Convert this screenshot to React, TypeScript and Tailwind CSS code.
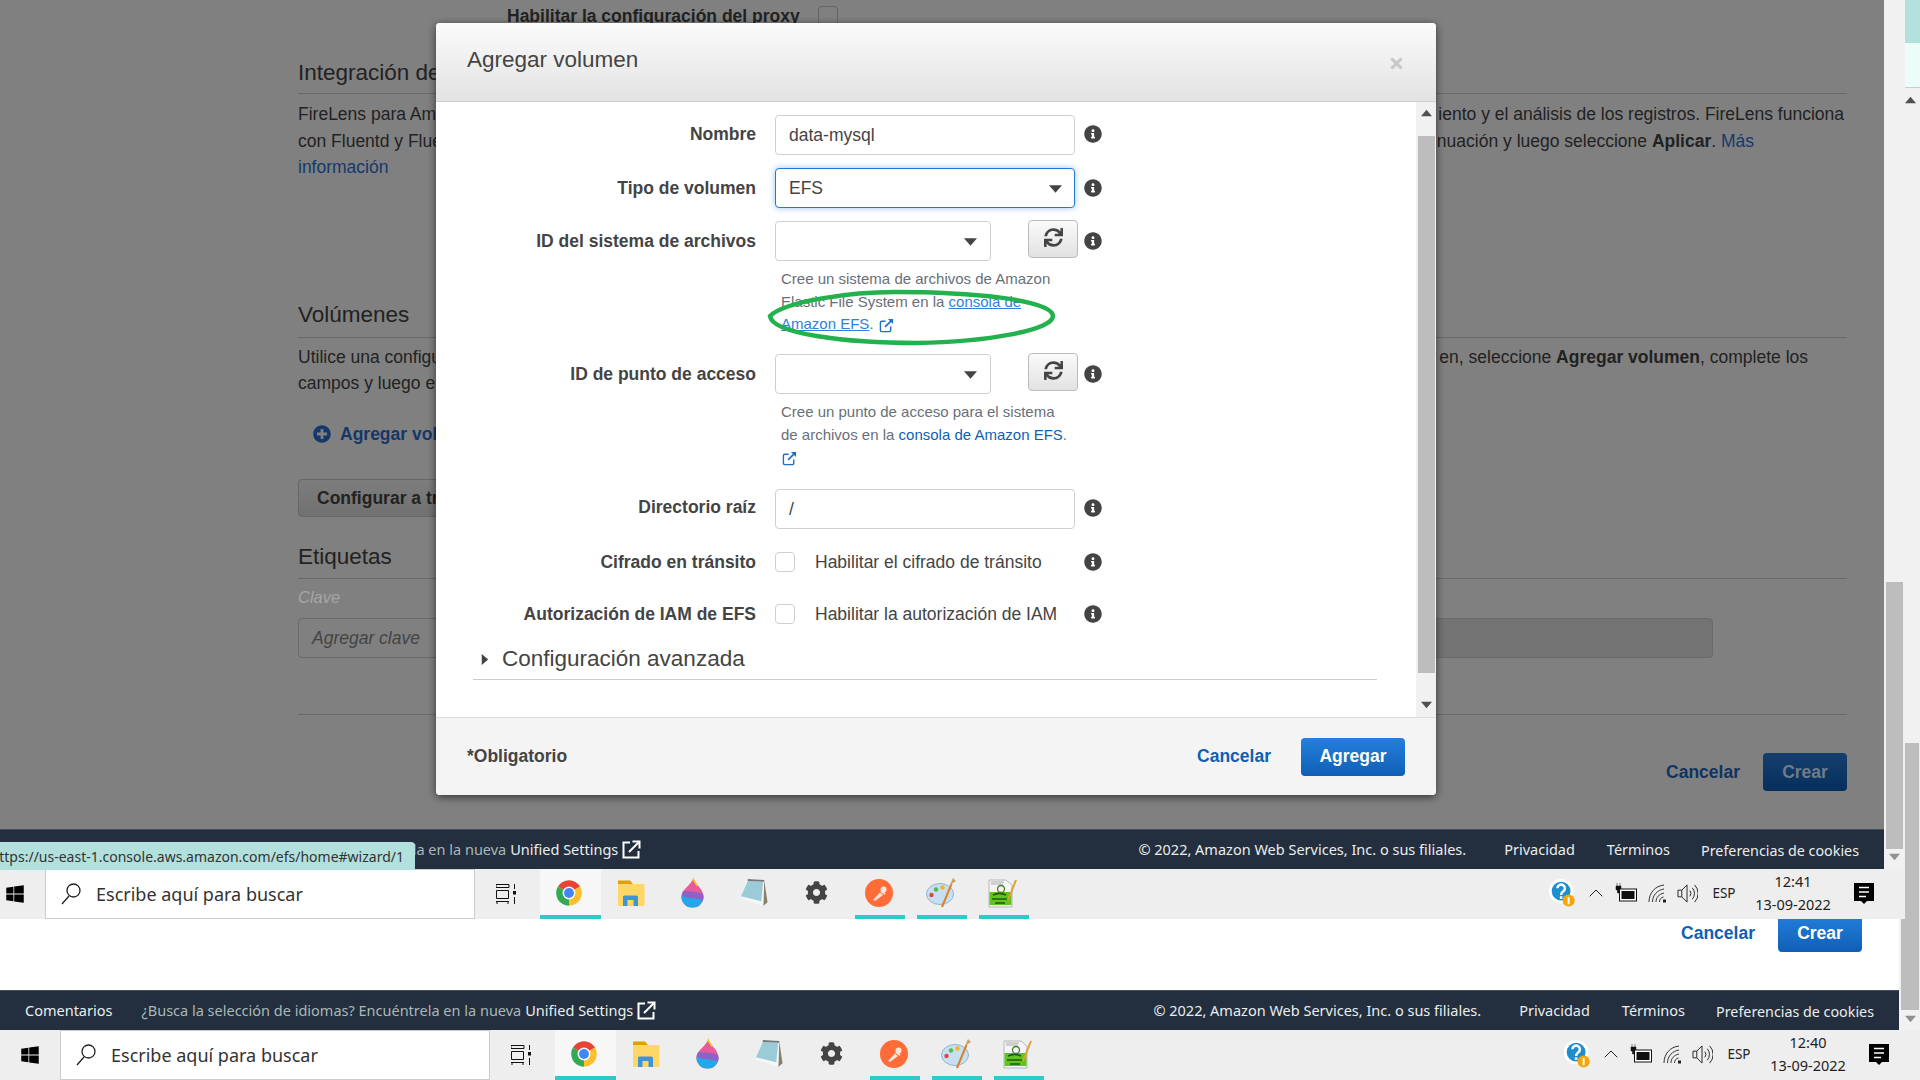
import React from "react";
import { FaInfoCircle, FaSync, FaTimes, FaPlusCircle, FaWindows, FaCog } from "react-icons/fa";
import { ChevronUp } from "lucide-react";

const Tri = ({ dir = "down", className = "" }: { dir?: "down" | "up" | "right"; className?: string }) => (
  <svg viewBox="0 0 12 12" className={className} fill="currentColor">
    {dir === "down" && <polygon points="0,3 12,3 6,10" />}
    {dir === "up" && <polygon points="0,10 12,10 6,3" />}
    {dir === "right" && <polygon points="3,0 10,6 3,12" />}
  </svg>
);

const ExtLink = ({ className = "" }: { className?: string }) => (
  <svg viewBox="0 0 16 16" className={className} fill="none" stroke="currentColor">
    <path d="M12.5 9v4a1.5 1.5 0 0 1-1.5 1.5H3A1.5 1.5 0 0 1 1.5 13V5A1.5 1.5 0 0 1 3 3.500h4" strokeWidth="1.500" />
    <path d="M6.500 9.500 14 2" strokeWidth="1.800" />
    <path d="M9.500 1h5.500v5.500z" fill="currentColor" stroke="none" />
  </svg>
);

const SettingsLink = () => (
  <svg viewBox="0 0 19 19" className="w-[19px] h-[19px] text-white ml-[4px]" fill="none" stroke="currentColor" strokeWidth="2">
    <path d="M8 2.500H1.500v15h15V11" />
    <path d="M7 12 16.500 2.500" />
    <path d="M10.500 1.500h7v7" />
  </svg>
);

const Chrome = () => (
  <svg viewBox="0 0 48 48" className="w-[28px] h-[28px]">
    <path d="M24 24 4.950 13A22 22 0 0 1 43.050 13z" fill="#ea4335" />
    <path d="M24 24 43.050 13A22 22 0 0 1 24 46z" fill="#fbc02d" />
    <path d="M24 24 24 46A22 22 0 0 1 4.950 13z" fill="#34a853" />
    <circle cx="24" cy="24" r="11" fill="#fff" />
    <circle cx="24" cy="24" r="8.500" fill="#4285f4" />
  </svg>
);

const Folder = () => (
  <svg viewBox="0 0 28 28" className="w-[28px] h-[28px]">
    <path d="M1 1.500h12l3 3.500H1z" fill="#e0a000" />
    <rect x="1" y="5" width="26.500" height="22" rx="1" fill="#ffd766" />
    <path d="M6 27V18a1.500 1.500 0 0 1 1.500-1.500h12A1.500 1.500 0 0 1 21 18v9h-4.500v-6h-6v6z" fill="#3d94dd" />
  </svg>
);

const Drop = ({ id }: { id: string }) => (
  <svg viewBox="0 0 24 32" className="w-[23px] h-[31px]">
    <defs>
      <clipPath id={id}>
        <path d="M13 0C14 7 23.500 12 23.500 20.500A11.500 11.500 0 0 1 .5 20.500C.5 12 11 9 13 0z" />
      </clipPath>
    </defs>
    <g clipPath={`url(#${id})`}>
      <rect width="24" height="32" fill="#e85a98" />
      <path d="M10 0h14v9h-8z" fill="#f7d117" />
      <path d="M0 14C8 16 16 14 24 18V25C16 21 8 23 0 19z" fill="#8a62c8" />
      <path d="M0 19C8 23 16 21 24 25V32H0z" fill="#1fa8ea" />
    </g>
  </svg>
);

const NotepadIcon = () => (
  <svg viewBox="0 0 30 30" className="w-[29px] h-[29px]">
    <path d="M25 2 28.500 25 24 29z" fill="#8b8064" />
    <path d="M8 1 25 2 24 29 0 21z" fill="#f2f7f8" />
    <path d="M8 3 24 4 22 24 1 19z" fill="#9ccbd8" />
    <path d="M8 1 25 2 25 4 8 3z" fill="#777" />
  </svg>
);

const Postman = () => (
  <svg viewBox="0 0 28 28" className="w-[28px] h-[28px]">
    <circle cx="14" cy="14" r="14" fill="#ff6c37" />
    <path d="M8 21 15 13.500l3 2.500L10 22z" fill="#ffe3d8" />
    <circle cx="18.500" cy="10.500" r="3" fill="#ffe3d8" />
    <path d="M16 12l4 3" stroke="#ffe3d8" strokeWidth="2" />
  </svg>
);

const Palette = () => (
  <svg viewBox="0 0 30 30" className="w-[30px] h-[30px]">
    <ellipse cx="14" cy="16" rx="13.500" ry="10.500" fill="#c6e0f2" stroke="#7ea8c8" strokeWidth="0.800" />
    <circle cx="5.500" cy="17" r="2.200" fill="#e0453e" />
    <circle cx="10" cy="11.500" r="2.200" fill="#58b848" />
    <circle cx="16.500" cy="9.500" r="2.200" fill="#f0b820" />
    <path d="M16 29 25.500 6" stroke="#d8822a" strokeWidth="2" />
    <path d="M24 7 27 0 30 3z" fill="#c8a070" />
  </svg>
);

const NotepadPP = () => (
  <svg viewBox="0 0 30 30" className="w-[30px] h-[30px]">
    <path d="M1 2h17l6 5v22H1z" fill="#f4f4f4" stroke="#aaa" strokeWidth="0.800" />
    <path d="M3 4h13M3 6h12" stroke="#9a9a9a" strokeWidth="0.800" />
    <rect x="1.500" y="14" width="22" height="13" fill="#5fc41c" />
    <path d="M5 17c4-2 9-2 13 0M4 21h15M7 25h10" stroke="#23561a" strokeWidth="1.600" fill="none" />
    <circle cx="13" cy="11" r="3.500" fill="none" stroke="#447a2a" strokeWidth="1.300" />
    <path d="M20 22 28 2" stroke="#e0a030" strokeWidth="2" />
  </svg>
);

const TaskView = () => (
  <svg viewBox="0 0 21 20" className="w-[21px] h-[20px]" fill="none" stroke="#111" strokeWidth="1">
    <path d="M0 .5h13M0 3.500h13M.5 6.500h12v8H.5zM0 17.500h13M1 17.500V20M12 17.500V20M0 .5V3.500M13 .5V3.500" />
    <path d="M18.500 0v5M18.500 13v7" />
    <rect x="17" y="7" width="3" height="3.500" fill="#111" stroke="none" />
  </svg>
);

const Magnifier = () => (
  <svg viewBox="0 0 20 22" className="w-[20px] h-[22px]" fill="none" stroke="#222" strokeWidth="1.300">
    <circle cx="12.500" cy="7.500" r="6.500" />
    <path d="M8 13 1 21" />
  </svg>
);

const HelpIcon = () => (
  <svg viewBox="0 0 30 32" className="w-[30px] h-[30px]">
    <circle cx="13" cy="14" r="13" fill="#fff" />
    <circle cx="13" cy="14" r="10" fill="#1f8ecf" />
    <path d="M9 11a4 4 0 1 1 6 3.500c-1.500 1-2 1.500-2 3.500" fill="none" stroke="#fff" strokeWidth="2.600" />
    <rect x="11.600" y="19.500" width="2.800" height="2.800" fill="#fff" />
    <circle cx="21" cy="24" r="6.500" fill="#f4a60c" />
    <rect x="20" y="20.500" width="2" height="7.500" fill="#fff" />
  </svg>
);

const Battery = () => (
  <svg viewBox="0 0 22 20" className="w-[22px] h-[20px]">
    <path d="M2 0v3M5 0v3M1 3h5v4H4.500v3h-2V7H1z" fill="#111" stroke="#111" strokeWidth="0.500" />
    <rect x="4.500" y="6" width="17" height="12" fill="#fff" stroke="#111" />
    <rect x="6.500" y="8" width="13" height="8" fill="#111" />
  </svg>
);

const WifiIcon = () => (
  <svg viewBox="0 0 20 20" className="w-[20px] h-[20px]" fill="none" stroke="#333" strokeWidth="1">
    <path d="M1 19C1 10 7 3 16 2" />
    <path d="M4.500 19C4.500 12 9.500 7 16 6" />
    <path d="M8 19C8 14.500 11 11 16 10" />
    <path d="M11.500 19c0-2.500 1.500-4.500 4-5" />
    <rect x="15" y="16.500" width="3" height="3" fill="#222" stroke="none" />
  </svg>
);

const SoundIcon = () => (
  <svg viewBox="0 0 22 22" className="w-[21px] h-[21px]" fill="none" stroke="#222" strokeWidth="1">
    <path d="M1 7.500h4L10.500 2v18L5 14.500H1zM5 7.500v7" />
    <path d="M13.500 8a5 5 0 0 1 0 6" />
    <path d="M16 5a9 9 0 0 1 0 12" />
    <path d="M18.500 2a13 13 0 0 1 0 18" />
  </svg>
);

const NotifIcon = () => (
  <svg viewBox="0 0 20 21" className="w-[20px] h-[21px]">
    <rect width="20" height="18" fill="#000" />
    <path d="M7 18h6l-3 3z" fill="#000" />
    <path d="M5 4.500h10M5 9h10M5 13.500h7" stroke="#fff" strokeWidth="1.300" />
  </svg>
);

const uiFont = "font-['Noto_Sans','Open_Sans',sans-serif]";
const awsFont = "font-['Liberation_Sans',Arial,sans-serif]";

const Tile = ({ children, bar }: { children: React.ReactNode; bar?: boolean }) => (
  <div className="relative w-[62px] h-full flex items-center justify-center pb-[3px] pr-[3px]">
    {children}
    {bar && <div className="absolute bottom-0 left-[6px] right-[6px] h-[4px] bg-[#2ecacb]" />}
  </div>
);

const Taskbar = ({ lead, time, width, dropId }: { lead: string; time: string; width: string; dropId: string }) => (
  <div className={`${width} ${uiFont} h-[50px] bg-[#eeeeee] flex items-stretch shrink-0 text-[#222]`}>
    <div className={`${lead} flex items-center justify-end pr-[20px] shrink-0`}>
      <FaWindows className="w-[20px] h-[20px] text-black" />
    </div>
    <div className="w-[430px] shrink-0 bg-white border border-[#cccccc] flex items-center pl-[15px] gap-[15px]">
      <Magnifier />
      <span className="text-[18px] text-[#333]">Escribe aquí para buscar</span>
    </div>
    <div className="w-[65px] shrink-0 flex items-center justify-center pr-[3px]">
      <TaskView />
    </div>
    <div className="relative w-[61px] shrink-0 bg-[#f7f7f7] flex items-center justify-center pb-[3px] pr-[3px]">
      <Chrome />
      <div className="absolute bottom-0 inset-x-0 h-[4px] bg-[#2ecacb]" />
    </div>
    <Tile><Folder /></Tile>
    <Tile><Drop id={dropId} /></Tile>
    <Tile><NotepadIcon /></Tile>
    <Tile><FaCog className="w-[23px] h-[23px] text-[#444]" /></Tile>
    <Tile bar><Postman /></Tile>
    <Tile bar><Palette /></Tile>
    <Tile bar><NotepadPP /></Tile>
    <div className="ml-auto flex items-center h-full pr-[14px] pb-[2px]">
      <div className="w-[36px] flex justify-center"><HelpIcon /></div>
      <div className="w-[30px] flex justify-center"><ChevronUp className="w-[24px] h-[24px] text-[#222]" strokeWidth={1} /></div>
      <div className="w-[30px] flex justify-center"><Battery /></div>
      <div className="w-[34px] flex justify-center"><WifiIcon /></div>
      <div className="w-[24px] flex justify-center"><SoundIcon /></div>
      <div className="w-[50px] text-center text-[13.5px]">ESP</div>
      <div className="w-[88px] flex flex-col items-center text-[14.5px] leading-[23px]">
        <span>{time}</span>
        <span>13-09-2022</span>
      </div>
      <div className="w-[54px] flex justify-center"><NotifIcon /></div>
    </div>
  </div>
);

const Footer = ({ lead, width }: { lead: string; width: string }) => (
  <div className={`${width} ${lead} ${uiFont} h-[40px] shrink-0 bg-[#232f3e] border-t border-[#414d5c] pr-[25px] flex items-center text-[14.5px] text-[#eaeded] whitespace-nowrap`}>
    <span>Comentarios</span>
    <span className="ml-[29px] text-[#aab7b8]">¿Busca la selección de idiomas? Encuéntrela en la nueva</span>
    <span className="ml-[4px]">Unified Settings</span>
    <SettingsLink />
    <span className="ml-auto">© 2022, Amazon Web Services, Inc. o sus filiales.</span>
    <span className="ml-[38px]">Privacidad</span>
    <span className="ml-[32px]">Términos</span>
    <span className="ml-[31px] mt-[2px] text-[14.3px]">Preferencias de cookies</span>
  </div>
);

const Rule = "border-b border-[#6a6a6a]";

const DimPage = () => (
  <div className={`${awsFont} flex-1 h-[830px] overflow-hidden bg-[#808080] pl-[298px] pr-[37px] text-[17.5px] text-[#222]`}>
    <div className="h-[32px] flex items-center pl-[209px] gap-[18px] font-bold">
      <span>Habilitar la configuración del proxy</span>
      <div className="w-[20px] h-[20px] rounded-[4px] border border-[#666]" />
    </div>
    <h2 className={`h-[62px] pt-[26px] text-[22.5px] leading-[30px] font-normal ${Rule}`}>Integración de FireLens</h2>
    <div className="mt-[7px] leading-[26.500px]">
      <div className="flex justify-between whitespace-nowrap pr-[3px]"><span>FireLens para Amazon</span><span>iento y el análisis de los registros. FireLens funciona</span></div>
      <div className="flex justify-between whitespace-nowrap pr-[93px]"><span>con Fluentd y Fluent Bit</span><span>nuación y luego seleccione <b>Aplicar</b>. <span className="text-[#15386a]">Más</span></span></div>
      <div className="text-[#15386a]">información</div>
    </div>
    <h2 className={`h-[157.5px] pt-[119.5px] text-[22.5px] leading-[30px] font-normal ${Rule}`}>Volúmenes</h2>
    <div className="mt-[6px] leading-[26px]">
      <div className="flex justify-between whitespace-nowrap pr-[39px]"><span>Utilice una configuración</span><span>en, seleccione <b>Agregar volumen</b>, complete los</span></div>
      <div>campos y luego elija</div>
    </div>
    <div className="mt-[23px] h-[30px] pl-[15px] flex items-center gap-[9px] font-bold text-[#15386a]">
      <FaPlusCircle className="w-[18px] h-[18px]" />
      <span>Agregar volumen</span>
    </div>
    <div className="mt-[30px] w-[300px] h-[38px] rounded-[4px] border border-[#666] bg-gradient-to-b from-[#7d7d7d] to-[#717171] pl-[18px] flex items-center font-bold">
      Configurar a través de JSON
    </div>
    <h2 className={`h-[62px] pt-[25px] text-[22.5px] leading-[30px] font-normal ${Rule}`}>Etiquetas</h2>
    <div className="mt-[5px] leading-[27px] italic text-[#a6a6a6] text-[16.500px]">Clave</div>
    <div className="mt-[7px] flex gap-[16px] pr-[134px]">
      <div className="w-[440px] h-[40px] rounded-[4px] border border-[#6a6a6a] pl-[13px] flex items-center italic text-[#444] shrink-0">Agregar clave</div>
      <div className="flex-1 h-[40px] rounded-[4px] border border-[#6a6a6a] bg-[#737373]" />
    </div>
    <div className={`h-[57px] ${Rule}`} />
    <div className="mt-[38px] flex justify-end items-center gap-[23px] font-bold">
      <span className="text-[#10335f]">Cancelar</span>
      <div className="w-[84px] h-[38px] rounded-[4px] bg-gradient-to-b from-[#153f6d] to-[#062f5c] flex items-center justify-center text-[#6f7c8a]">Crear</div>
    </div>
  </div>
);

const Info = () => <FaInfoCircle className="w-[18px] h-[18px] text-[#444] shrink-0" />;
const inputCls = "h-[40px] rounded-[4px] border border-[#cfcfcf] bg-white flex items-center text-[#444]";

const Row = ({ label, children, className = "", up = "" }: { label: string; children: React.ReactNode; className?: string; up?: string }) => (
  <div className={`flex items-center h-[40px] ${className}`}>
    <div className={`w-[320px] text-right font-bold text-[#444] shrink-0 ${up}`}>{label}</div>
    <div className="w-[309px] ml-[19px] shrink-0 flex items-center">{children}</div>
    <div className={`w-[18px] ${up} flex`}><Info /></div>
  </div>
);

const SelectRefresh = () => (
  <>
    <div className={`${inputCls} w-[216px] justify-end pr-[13px]`}>
      <Tri className="w-[13px] h-[13px] text-[#444]" />
    </div>
    <div className="ml-[37px] mb-[4px] w-[50px] h-[38px] rounded-[4px] border border-[#bbbbbb] bg-gradient-to-b from-[#fafafa] to-[#e2e2e2] flex items-center justify-center pb-[3px]">
      <FaSync className="w-[19px] h-[19px] text-[#444]" />
    </div>
  </>
);

const Help = ({ children }: { children: React.ReactNode }) => (
  <div className="mt-[7px] ml-[345px] h-[67px] text-[15px] leading-[22.500px] text-[#687078] whitespace-nowrap">{children}</div>
);

const Check = () => <div className="w-[20px] h-[20px] rounded-[4px] border border-[#cfcfcf] bg-white shrink-0" />;

const Modal = () => (
  <div className={`${awsFont} absolute z-20 left-[436px] top-[23px] w-[1000px] h-[772px] bg-white rounded-[4px] shadow-[0_2px_8px_rgba(0,0,0,0.6)] flex flex-col overflow-hidden text-[17.5px]`}>
    <div className="h-[79px] shrink-0 bg-gradient-to-b from-[#fbfbfb] to-[#e3e3e3] border-b border-[#cfcfcf] pl-[31px] pr-[31px] flex items-center justify-between">
      <span className="text-[22.5px] text-[#444] pb-[4px]">Agregar volumen</span>
      <FaTimes className="w-[17px] h-[17px] text-[#c9c9c9] mt-[3px]" />
    </div>
    <div className="flex-1 flex min-h-0">
      <div className="flex-1 pt-[13px] min-w-0">
        <Row label="Nombre" up="mb-[2px]">
          <div className={`${inputCls} w-[300px] pl-[13px]`}>data-mysql</div>
        </Row>
        <Row label="Tipo de volumen" className="mt-[13px]">
          <div className="h-[40px] w-[300px] rounded-[4px] border border-[#1f7ad6] bg-white shadow-[0_0_6px_rgba(60,140,230,0.5)] flex items-center justify-between pl-[13px] pr-[12px] text-[#444]">
            EFS
            <Tri className="w-[13px] h-[13px] text-[#444]" />
          </div>
        </Row>
        <Row label="ID del sistema de archivos" className="mt-[13px]"><SelectRefresh /></Row>
        <Help>
          <div>Cree un sistema de archivos de Amazon</div>
          <div>Elastic File System en la <span className="text-[#2f7fdc] underline">consola de</span></div>
          <div>
            <span className="text-[#2f7fdc] underline">Amazon EFS</span>.{" "}
            <ExtLink className="inline w-[15px] h-[15px] ml-[1px] text-[#1f6fc8]" />
          </div>
        </Help>
        <Row label="ID de punto de acceso" className="mt-[19px]"><SelectRefresh /></Row>
        <Help>
          <div>Cree un punto de acceso para el sistema</div>
          <div>de archivos en la <span className="text-[#0f5fb5]">consola de Amazon EFS</span>.</div>
          <div><ExtLink className="inline w-[15px] h-[15px] ml-[1px] text-[#1f6fc8]" /></div>
        </Help>
        <Row label="Directorio raíz" className="mt-[21px]" up="mb-[3px]">
          <div className={`${inputCls} w-[300px] pl-[13px]`}>/</div>
        </Row>
        <Row label="Cifrado en tránsito" className="mt-[13px]">
          <Check />
          <span className="ml-[20px] text-[#444]">Habilitar el cifrado de tránsito</span>
        </Row>
        <Row label="Autorización de IAM de EFS" className="mt-[12px]">
          <Check />
          <span className="ml-[20px] text-[#444]">Habilitar la autorización de IAM</span>
        </Row>
        <div className="mt-[6px] ml-[37px] w-[904px] h-[40px] border-b border-[#cccccc] pl-[6px] flex items-center gap-[12px] text-[#444] pb-[2px]">
          <Tri dir="right" className="w-[11px] h-[11px] text-[#444] mt-[2px]" />
          <span className="text-[22.5px]">Configuración avanzada</span>
        </div>
      </div>
      <div className="w-[20px] shrink-0 bg-[#f1f1f1] flex flex-col items-center">
        <Tri dir="up" className="w-[11px] h-[11px] text-[#505050] mt-[5px] shrink-0" />
        <div className="w-[17px] h-[537px] bg-[#bdbdbd] mt-[18px] shrink-0" />
        <Tri dir="down" className="w-[11px] h-[11px] text-[#505050] mt-[26px] shrink-0" />
      </div>
    </div>
    <div className="h-[78px] shrink-0 bg-[#f4f4f4] border-t border-[#dddddd] pl-[31px] pr-[31px] flex items-center justify-between font-bold">
      <span className="text-[#444]">*Obligatorio</span>
      <div className="flex items-center gap-[30px]">
        <span className="text-[#0f5fb5]">Cancelar</span>
        <div className="w-[104px] h-[38px] rounded-[4px] bg-gradient-to-b from-[#2380dd] to-[#0f5fb5] flex items-center justify-center text-white">Agregar</div>
      </div>
    </div>
  </div>
);

export default function App() {
  return (
    <div className="relative w-[1920px] h-[1080px] overflow-hidden bg-white flex flex-col">
      {/* outer window scrollbar */}
      <div className="absolute left-[1899px] top-0 w-[21px] h-[1030px] bg-[#f1f1f1]">
        <div className="absolute left-[6px] top-0 w-[15px] h-[43px] bg-[#b2e0dd]" />
        <div className="absolute left-[6px] top-[43px] w-[15px] h-[45px] bg-[#ecfcfb] border-b border-[#cccccc]" />
        <Tri dir="up" className="absolute left-[6px] top-[94px] w-[11px] h-[11px] text-[#505050]" />
        <div className="absolute left-[2px] top-[743px] w-[18px] h-[267px] bg-[#bdbdbd]" />
        <Tri dir="down" className="absolute left-[6px] top-[1013px] w-[11px] h-[11px] text-[#909090]" />
      </div>

      {/* upper window */}
      <div className="relative z-10 w-[1905px] h-[919px] shrink-0 flex flex-col">
        <div className="flex h-[869px] shrink-0 items-stretch">
          <div className="w-[1884px] shrink-0 flex flex-col">
            <DimPage />
            <Footer lead="pl-[10px]" width="w-[1884px]" />
          </div>
          <div className="relative w-[21px] bg-[#f1f1f1] flex flex-col items-center pt-[582px]">
            <div className="w-[17px] h-[267px] bg-[#bdbdbd] -ml-[1px]" />
            <Tri dir="down" className="w-[11px] h-[11px] text-[#909090] mt-[2px]" />
          </div>
        </div>
        <Taskbar lead="w-[45px]" time="12:41" width="w-[1905px]" dropId="dropA" />
      </div>

      {/* lower window */}
      <div className={`${awsFont} w-[1899px] h-[71px] shrink-0 bg-white pr-[37px] flex justify-end gap-[23px] font-bold text-[17.5px]`}>
        <span className="text-[#0f5fb5] mt-[1px]">Cancelar</span>
        <div className="w-[84px] h-[38px] -mt-[5px] rounded-[4px] bg-gradient-to-b from-[#2380dd] to-[#0f5fb5] flex items-center justify-center text-white">Crear</div>
      </div>
      <Footer lead="pl-[25px]" width="w-[1899px]" />
      <Taskbar lead="w-[60px]" time="12:40" width="w-[1920px]" dropId="dropB" />

      <Modal />

      {/* URL status tooltip */}
      <div className={`${uiFont} absolute z-30 left-0 top-[842px] w-[415px] h-[28px] bg-[#b2e0dd] rounded-tr-[4px] overflow-hidden flex items-center justify-end pr-[11px] text-[14px] text-[#333] whitespace-nowrap`}>
        ttps://us-east-1.console.aws.amazon.com/efs/home#wizard/1
      </div>

      {/* hand-drawn green ellipse */}
      <svg viewBox="0 0 290 57" className="absolute z-40 left-[767px] top-[289px] w-[290px] h-[57px]" fill="none" stroke="#22b14c" strokeWidth="4.500">
        <path d="M3 27C18 12 85 3 128 3C200 3 285 10 286 27C286 41 220 53 150 54C80 54 5 45 3 27Z" />
      </svg>
    </div>
  );
}
